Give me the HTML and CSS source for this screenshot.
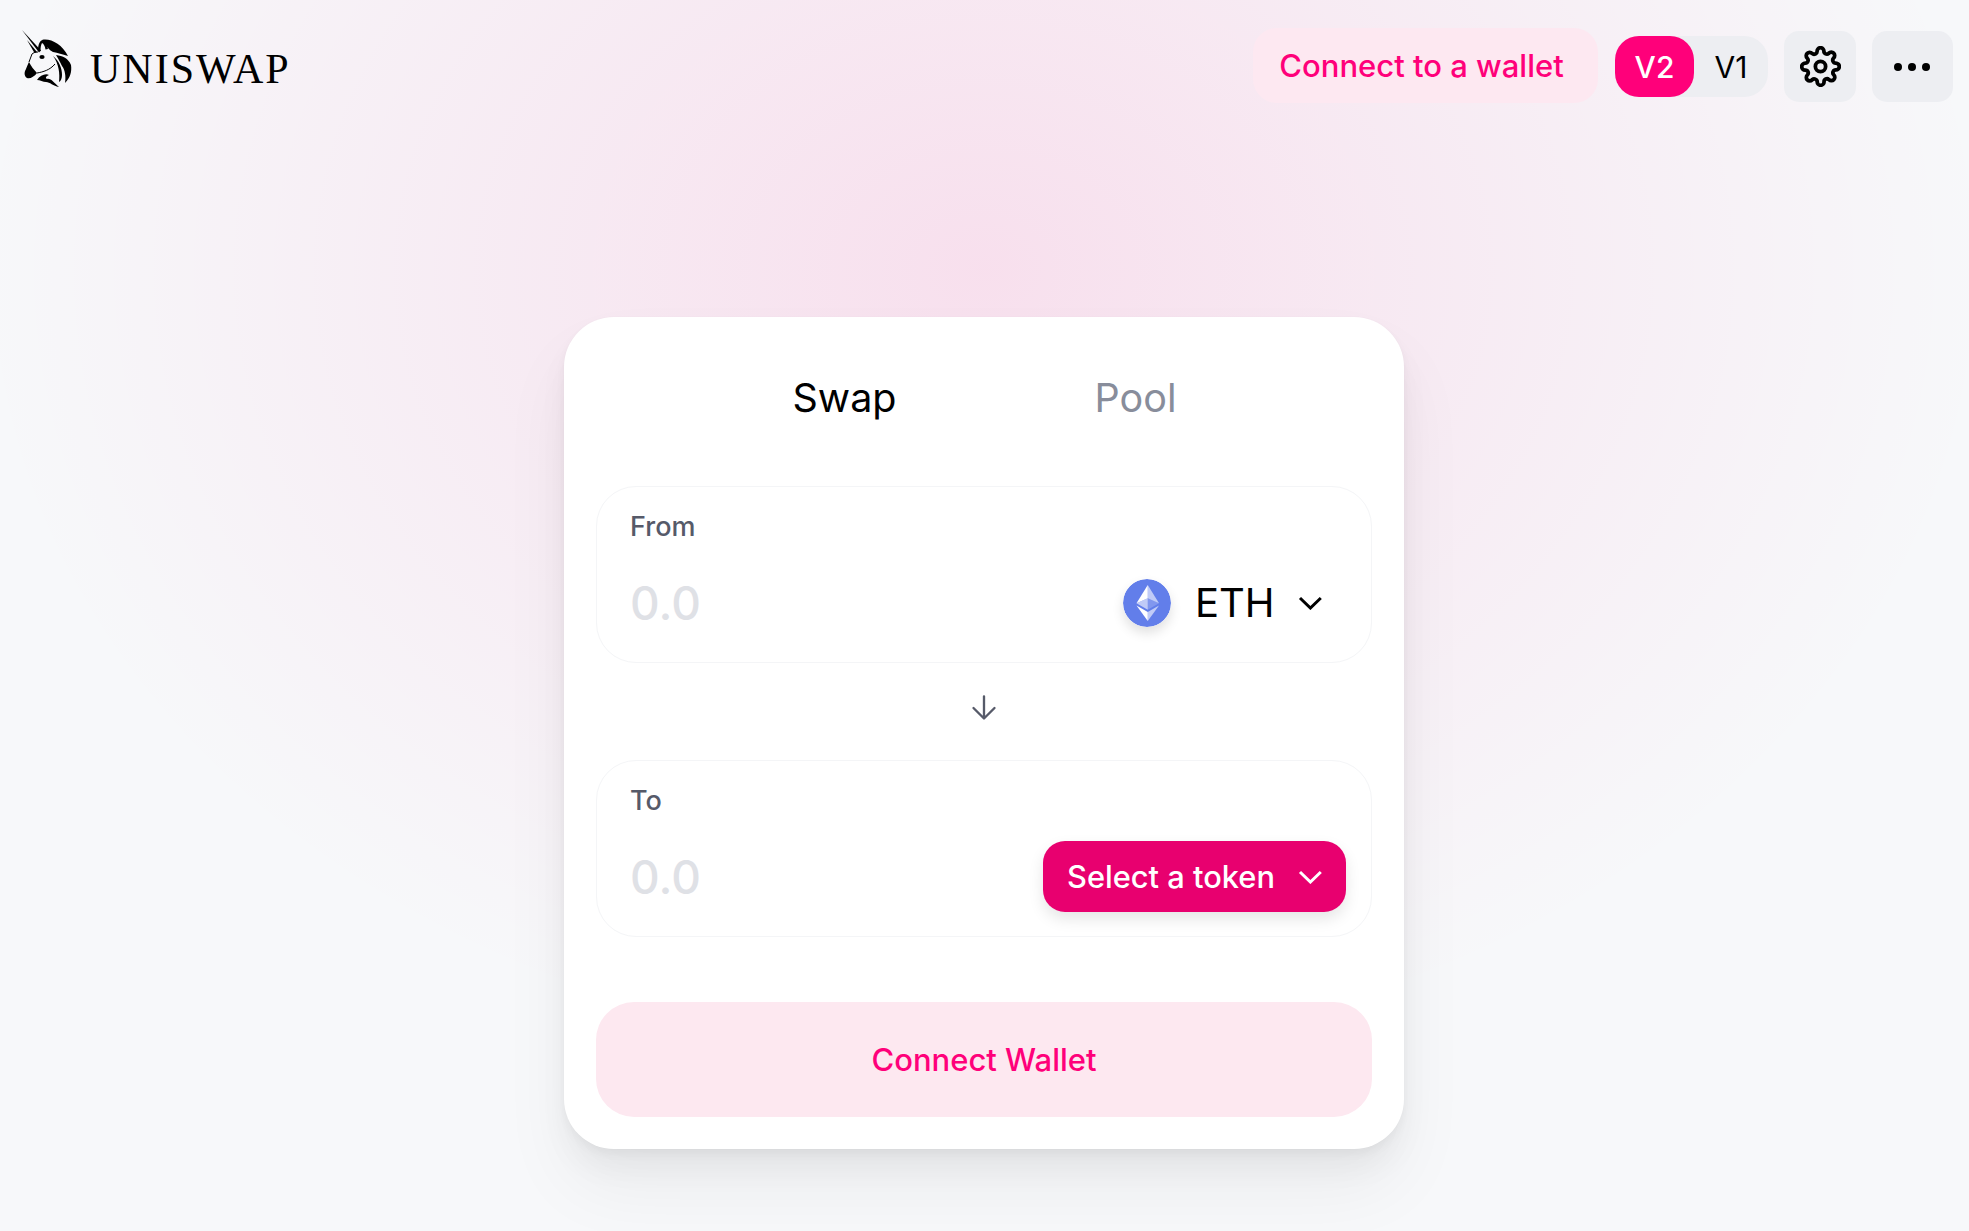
FILE: index.html
```html
<!DOCTYPE html>
<html lang="en">
<head>
    <meta charset="UTF-8">
    <meta name="viewport" content="width=device-width, initial-scale=1.0">
    <title>Uniswap Interface</title>
    <link rel="stylesheet" href="styles.css">
</head>
<body>
    <header class="header">
        <a class="logo">
            <svg class="logo-mark" viewBox="0 0 64 66" fill="#000">
                <path d="M6 4L25 24.5 23 26.5z"/>
                <path d="M11 14L21 26 18.5 27z"/>
                <path d="M22 25C22 18 24 14 27 14c3 1 4 5 5 9l-2.500 .5C29 20 27.500 17.500 26 17c-1 1.500-1.500 4.500-1.500 8z"/>
                <path d="M26 14C34 12 46 18 52 30 46 28 42 27 37 26 33 24 30 20 26 14z"/>
                <path d="M40 29C47 30 52 32 55 39 56 46 54 52 49 57 50 50 49 44 46 40 44 36 42 32 40 29z"/>
                <path d="M37 30C43 35 46 42 46 49 46 52 45 55 43 56 44 48 43 38 37 30z"/>
                <path d="M13 36C15 40 18 44 21 47 18 51 14 53 11 52 8 50 8 46 10 43 11 40 12 38 13 36z"/>
                <ellipse cx="26" cy="31" rx="2.600" ry="2"/>
                <path d="M21 54C24 49 30 47 33 49 30 50 29 52 31 53 35 52 38 57 43 61 37 60 34 56 30 56 27 56 24 54 21 54z"/>
                <path d="M21 47C27 46 34 44 39 38M22 26C19 26 17 27 16 28 15 31 14 33 13 36" fill="none" stroke="#000" stroke-width="1"/>
            </svg>
            <span class="logo-text">UNISWAP</span>
        </a>
        <div class="header-actions">
            <button class="wallet-btn">Connect to a wallet</button>
            <div class="version-toggle">
                <span class="version version-active">V2</span>
                <span class="version">V1</span>
            </div>
            <button class="icon-btn">
                <svg class="gear" viewBox="0 0 24 24" fill="none" stroke="#000" stroke-width="2.200" stroke-linecap="round" stroke-linejoin="round">
                    <circle cx="12" cy="12" r="3"/>
                    <path d="M19.4 15a1.65 1.65 0 0 0 .33 1.82l.06.06a2 2 0 0 1 0 2.83 2 2 0 0 1-2.83 0l-.06-.06a1.65 1.65 0 0 0-1.82-.33 1.65 1.65 0 0 0-1 1.51V21a2 2 0 0 1-2 2 2 2 0 0 1-2-2v-.09A1.65 1.65 0 0 0 9 19.4a1.65 1.65 0 0 0-1.82.33l-.06.06a2 2 0 0 1-2.83 0 2 2 0 0 1 0-2.83l.06-.06a1.65 1.65 0 0 0 .33-1.82 1.65 1.65 0 0 0-1.51-1H3a2 2 0 0 1-2-2 2 2 0 0 1 2-2h.09A1.65 1.65 0 0 0 4.6 9a1.65 1.65 0 0 0-.33-1.82l-.06-.06a2 2 0 0 1 0-2.83 2 2 0 0 1 2.83 0l.06.06a1.65 1.65 0 0 0 1.82.33H9a1.65 1.65 0 0 0 1-1.51V3a2 2 0 0 1 2-2 2 2 0 0 1 2 2v.09a1.65 1.65 0 0 0 1 1.51 1.65 1.65 0 0 0 1.82-.33l.06-.06a2 2 0 0 1 2.83 0 2 2 0 0 1 0 2.83l-.06.06a1.65 1.65 0 0 0-.33 1.82V9a1.65 1.65 0 0 0 1.51 1H21a2 2 0 0 1 2 2 2 2 0 0 1-2 2h-.09a1.65 1.65 0 0 0-1.51 1z"/>
                </svg>
            </button>
            <button class="icon-btn icon-btn-wide">
                <svg class="dots" viewBox="0 0 24 24" fill="#000">
                    <circle cx="5" cy="12" r="2"/>
                    <circle cx="12" cy="12" r="2"/>
                    <circle cx="19" cy="12" r="2"/>
                </svg>
            </button>
        </div>
    </header>

    <main class="card">
        <nav class="tabs">
            <a class="tab tab-active">Swap</a>
            <a class="tab">Pool</a>
        </nav>

        <section class="panel">
            <div class="panel-label">From</div>
            <div class="panel-row">
                <input class="amount" type="text" placeholder="0.0">
                <button class="token-btn">
                    <svg class="eth-icon" viewBox="0 0 32 32">
                        <circle cx="16" cy="16" r="16" fill="#627eea"/>
                        <path d="M16.5 4v8.87l7.5 3.35z" fill="#fff" fill-opacity=".6"/>
                        <path d="M16.5 4L9 16.22l7.5-3.35z" fill="#fff"/>
                        <path d="M16.5 21.97V28L24 17.62z" fill="#fff" fill-opacity=".6"/>
                        <path d="M16.5 28v-6.03L9 17.62z" fill="#fff"/>
                        <path d="M16.5 20.57l7.5-4.35-7.5-3.35z" fill="#fff" fill-opacity=".2"/>
                        <path d="M9 16.22l7.5 4.35v-7.7z" fill="#fff" fill-opacity=".6"/>
                    </svg>
                    <span class="token-name">ETH</span>
                    <svg class="chevron" viewBox="0 0 12 7" fill="none" stroke="#000" stroke-width="1.5"><path d="M1 1l5.2 5 5.2-5"/></svg>
                </button>
            </div>
        </section>

        <div class="arrow-row">
            <svg class="arrow" viewBox="0 0 24 24" fill="none" stroke="#565a69" stroke-width="2" stroke-linecap="round" stroke-linejoin="round">
                <path d="M12 2v19M3 12l9 9 9-9"/>
            </svg>
        </div>

        <section class="panel">
            <div class="panel-label">To</div>
            <div class="panel-row">
                <input class="amount" type="text" placeholder="0.0">
                <button class="select-btn">
                    <span>Select a token</span>
                    <svg class="chevron" viewBox="0 0 12 7" fill="none" stroke="#fff" stroke-width="1.5"><path d="M1 1l5.2 5 5.2-5"/></svg>
                </button>
            </div>
        </section>

        <button class="connect-btn">Connect Wallet</button>
    </main>
</body>
</html>
```

FILE: styles.css
```css
* {
    box-sizing: border-box;
}

html,
body {
    height: 100%;
}

body {
    margin: 0;
    overflow: hidden;
    font-family: 'Inter', sans-serif;
    color: #000;
    background-color: #f7f8fa;
    background-image: radial-gradient(ellipse 1010px 800px at 984px 270px, rgba(252, 7, 125, 0.1) 0%, rgba(252, 7, 125, 0) 100%);
}

button {
    font-family: inherit;
    border: none;
    padding: 0;
}

.header {
    display: flex;
    justify-content: space-between;
    align-items: flex-start;
    height: 317px;
    padding: 26px 16px 0 16px;
}

.logo {
    display: flex;
    align-items: flex-start;
    gap: 10px;
}

.logo-mark {
    width: 64px;
    height: 66px;
}

.logo-text {
    font-family: 'Liberation Serif', serif;
    font-size: 42px;
    line-height: 48px;
    letter-spacing: 2px;
    margin-top: 19px;
}

.header-actions {
    display: flex;
    align-items: flex-start;
    margin-top: 2px;
}

.wallet-btn {
    width: 345px;
    height: 75px;
    padding-right: 8px;
    margin-right: 17px;
    border-radius: 24px;
    background-color: #fde8f1;
    color: #ff007a;
    font-size: 31px;
    font-weight: 500;
}

.version-toggle {
    display: flex;
    width: 153px;
    height: 61px;
    margin: 8px 16px 0 0;
    border-radius: 24px;
    background-color: #edeef2;
    font-size: 30px;
}

.version {
    flex: 1;
    display: flex;
    align-items: center;
    justify-content: center;
}

.version-active {
    flex: 0 0 79px;
    border-radius: 24px;
    background-color: #ff007a;
    color: #fff;
    font-weight: 500;
}

.icon-btn {
    display: flex;
    align-items: center;
    justify-content: center;
    width: 72px;
    height: 71px;
    margin: 3px 16px 0 0;
    border-radius: 15px;
    background-color: #edeef2;
}

.icon-btn-wide {
    width: 81px;
    padding-right: 2px;
    margin-right: 0;
}

.gear {
    width: 41px;
    height: 41px;
}

.dots {
    width: 48px;
    height: 48px;
}

.card {
    width: 840px;
    height: 832px;
    margin-left: 564px;
    padding: 0 32px;
    border-radius: 50px;
    background-color: #fff;
    box-shadow: 0 0 2px rgba(0, 0, 0, 0.02), 0 5px 10px rgba(0, 0, 0, 0.04), 0 20px 30px rgba(0, 0, 0, 0.04), 0 40px 70px rgba(0, 0, 0, 0.05);
}

.tabs {
    display: flex;
    justify-content: center;
    gap: 198px;
    height: 169px;
    padding: 57px 0 0 1px;
}

.tab {
    font-size: 39.5px;
    line-height: 48px;
    color: #888d9b;
}

.tab-active {
    color: #000;
}

.panel {
    height: 177px;
    padding: 24px 25px 0 33px;
    border: 1px solid #f4f5f7;
    border-radius: 40px;
}

.panel-label {
    font-size: 27px;
    line-height: 32px;
    font-weight: 500;
    color: #565a69;
}

.panel-row {
    display: flex;
    align-items: center;
    justify-content: space-between;
    height: 71px;
    margin-top: 24px;
}

.amount {
    width: 300px;
    padding: 0;
    border: none;
    outline: none;
    font-family: inherit;
    font-size: 46px;
    font-weight: 500;
    background: transparent;
}

.amount::placeholder {
    color: #dfe1e6;
}

.token-btn {
    display: flex;
    align-items: center;
    background: transparent;
    padding-right: 24px;
}

.eth-icon {
    width: 48px;
    height: 48px;
    border-radius: 50%;
    box-shadow: 0 6px 12px rgba(0, 0, 0, 0.12);
}

.token-name {
    margin: 0 23.5px;
    font-size: 40px;
}

.chevron {
    width: 24px;
    height: 14px;
}

.select-btn {
    display: flex;
    align-items: center;
    justify-content: space-between;
    width: 303px;
    height: 71px;
    padding: 0 24px;
    border-radius: 22px;
    background-color: #e8006f;
    color: #fff;
    font-size: 30.8px;
    font-weight: 500;
    box-shadow: 0 7px 15px rgba(0, 0, 0, 0.1);
}

.arrow-row {
    display: flex;
    justify-content: center;
    align-items: center;
    height: 97px;
    padding-bottom: 7px;
}

.arrow {
    width: 28px;
    height: 28px;
}

.connect-btn {
    display: block;
    width: 100%;
    height: 115px;
    margin-top: 65px;
    border-radius: 38px;
    background-color: #fde8f0;
    color: #ff007a;
    font-size: 31px;
    font-weight: 500;
}
```
